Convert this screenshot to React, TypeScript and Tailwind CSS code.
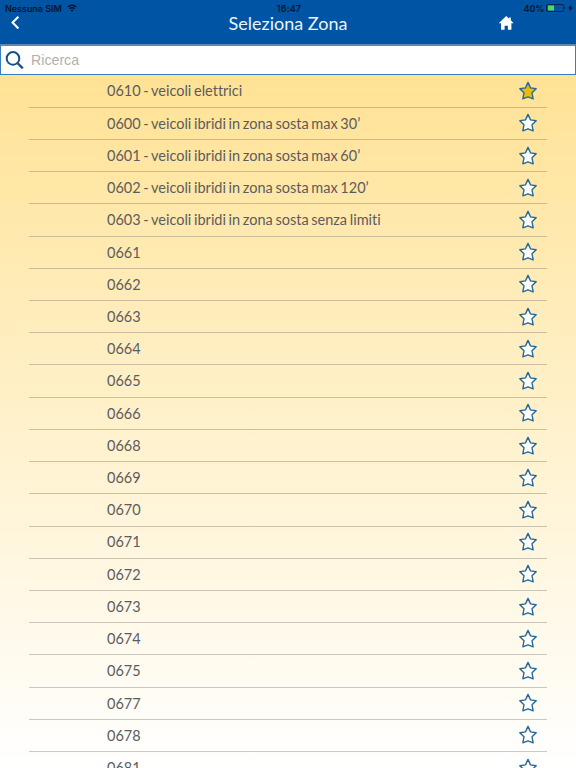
interface Zone {
  code: string;
  label?: string;
  favorite?: boolean;
}

const ZONES: Zone[] = [
  { code: "0610", label: "veicoli elettrici", favorite: true },
  { code: "0600", label: "veicoli ibridi in zona sosta max 30’" },
  { code: "0601", label: "veicoli ibridi in zona sosta max 60’" },
  { code: "0602", label: "veicoli ibridi in zona sosta max 120’" },
  { code: "0603", label: "veicoli ibridi in zona sosta senza limiti" },
  { code: "0661" },
  { code: "0662" },
  { code: "0663" },
  { code: "0664" },
  { code: "0665" },
  { code: "0666" },
  { code: "0668" },
  { code: "0669" },
  { code: "0670" },
  { code: "0671" },
  { code: "0672" },
  { code: "0673" },
  { code: "0674" },
  { code: "0675" },
  { code: "0677" },
  { code: "0678" },
  { code: "0681" },
];

function Star({ filled }: { filled?: boolean }) {
  return (
    <svg width="20" height="20" viewBox="0 0 20 20" className="shrink-0">
      <path
        d="M10 1.4 L12.5 6.9 L18.2 7.7 L14 11.8 L15.2 17.8 L10 15.8 L4.8 17.8 L6 11.8 L1.8 7.7 L7.5 6.9 Z"
        fill={filled ? "#e9bd09" : "#ffffff"}
        stroke="#2a6a98"
        strokeWidth="1.4"
        strokeLinejoin="round"
      />
    </svg>
  );
}

function StatusBar() {
  return (
    <div className="grid h-4 grid-cols-3 items-center pl-[5px] pr-[3px] font-['Inter',sans-serif] text-[9px] font-semibold leading-none text-[#04162b]">
      <div className="flex items-center gap-[5px]">
        <span className="tracking-[-0.04px]">Nessuna SIM</span>
        <svg width="10" height="8" viewBox="0 0 10 8" fill="none" stroke="currentColor" strokeWidth="1.3">
          <path d="M.5 3.1a6.4 6.4 0 0 1 9 0" />
          <path d="M2.3 4.9a3.8 3.8 0 0 1 5.4 0" />
          <path d="M5 7.7 3.6 6.2a2 2 0 0 1 2.8 0Z" fill="currentColor" stroke="none" />
        </svg>
      </div>
      <span className="text-center tracking-[0.15px]">16:47</span>
      <div className="flex items-center justify-end">
        <span className="mr-[2px] tracking-[-0.2px]">40%</span>
        <svg width="20" height="8" viewBox="0 0 20 8">
          <rect x=".6" y=".5" width="17" height="7" rx="1.5" fill="none" stroke="#06264c" strokeWidth="1.1" />
          <rect x="2" y="1.5" width="6" height="5" fill="#4cd964" />
          <path d="M18.4 2.3q1.6 1.7 0 3.4Z" fill="#06264c" />
        </svg>
        <svg width="5" height="8" viewBox="0 0 5 8" className="ml-[2px]">
          <path d="M3.5.5 0 4.5h2L1.3 7.5 5 3.5H3Z" fill="#04162b" />
        </svg>
      </div>
    </div>
  );
}

export default function App() {
  return (
    <div className="flex h-[768px] w-[576px] flex-col overflow-hidden bg-white font-['Lato',sans-serif]">
      {/* Header */}
      <header className="h-11 shrink-0 bg-[#0054a4]">
        <StatusBar />
        <div className="-mt-1 grid h-[22px] grid-cols-[1fr_auto_1fr] items-center">
          <svg width="10" height="14" viewBox="0 0 10 14" className="ml-[10px]">
            <path d="M8.4.8 2.6 6.6 8.4 12.4" fill="none" stroke="#ffffff" strokeWidth="2.1" />
          </svg>
          <h1 className="text-[18px] leading-5 text-[#edf3f9]">Seleziona Zona</h1>
          <svg width="16" height="16" viewBox="0 0 16 16" className="mr-[62px] justify-self-end">
            <path
              d="M8.2.9 11.2 3.8V2.5h1.6v2.8l2.9 2.9H13.4V14.8H9.9v-4H6.6v4H3V8.2H.7Z"
              fill="#ffffff"
            />
          </svg>
        </div>
      </header>

      {/* Search */}
      <div className="flex h-[31px] shrink-0 items-center border border-t-2 border-[#387dc0] border-t-[#5f88ae] bg-white pl-[3px]">
        <svg width="20" height="20" viewBox="0 0 20 20" fill="none" stroke="#14508c">
          <circle cx="9" cy="8.4" r="6.3" strokeWidth="2" />
          <path d="m13.4 13 5.4 5.4" strokeWidth="2.3" />
        </svg>
        <span className="ml-[7px] font-['Liberation_Sans',sans-serif] text-[14.2px] leading-none text-[#b0b0b0]">
          Ricerca
        </span>
      </div>

      {/* Zone list */}
      <ul className="min-h-0 flex-1 overflow-hidden bg-linear-to-b from-[#ffe294] to-white px-[29px] pt-[0.5px]">
        {ZONES.map((zone) => (
          <li
            key={zone.code}
            className="flex h-[32.23px] items-center justify-between border-b border-[#777]/40 pl-[78px] pr-[9px]"
          >
            <span className="pt-[0.6px] text-[14.5px] leading-5 text-[#5c5c5e] [font-variant-ligatures:none] [word-spacing:-1.05px]">
              {zone.label ? `${zone.code} - ${zone.label}` : zone.code}
            </span>
            <Star filled={zone.favorite} />
          </li>
        ))}
      </ul>
    </div>
  );
}
